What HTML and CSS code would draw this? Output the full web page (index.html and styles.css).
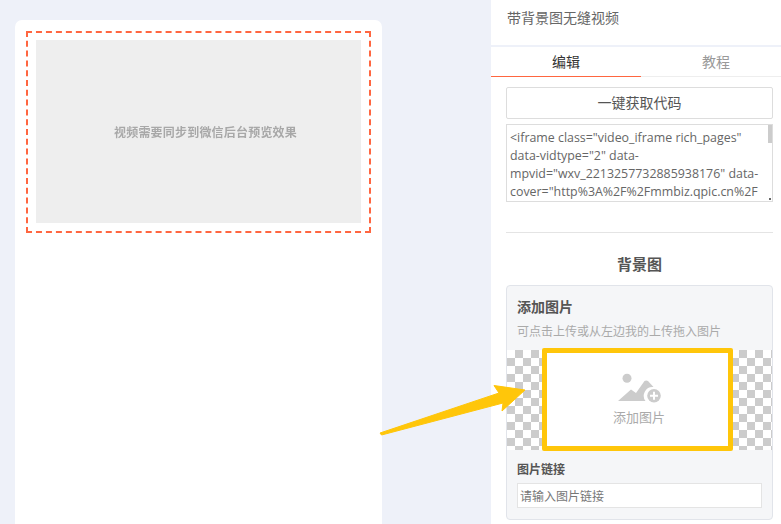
FILE: index.html
```html
<!DOCTYPE html>
<html lang="zh-CN">
<head>
    <meta charset="UTF-8">
    <meta name="viewport" content="width=device-width, initial-scale=1.0">
    <title>带背景图无缝视频</title>
    <link rel="stylesheet" href="styles.css">
</head>
<body>
    <div class="page">
        <div class="preview">
            <div class="phone">
                <div class="dashed">
                    <div class="video"><span class="videoText">视频需要同步到微信后台预览效果</span></div>
                </div>
            </div>
        </div>
        <div class="panel">
            <div class="panelTitle">带背景图无缝视频</div>
            <div class="tabs">
                <div class="tab active">编辑</div>
                <div class="tab">教程</div>
            </div>
            <div class="panelBody">
                <div class="copyBtn">一键获取代码</div>
                <div class="codeBox">
                    <textarea class="code" readonly>&lt;iframe class="video_iframe rich_pages" data-vidtype="2" data-mpvid="wxv_2213257732885938176" data-cover="http%3A%2F%2Fmmbiz.qpic.cn%2Fmmbiz_jpg%2FabcdefghijklmnopqrstuvwxyzABCDEFGHIJKLMNOPQRSTUVWXYZ0123456789abcdefghijklmnopqrstuvwxyz%2F0%3Fwx_fmt%3Djpeg" allowfullscreen="" frameborder="0" src="https://mp.weixin.qq.com/mp/readtemplate?t=pages/video_player_tmpl"&gt;&lt;/iframe&gt;</textarea>
                    <span class="codeThumb"></span>
                    <span class="codeArrow"></span>
                </div>
                <div class="line"></div>
                <div class="sectionTitle">背景图</div>
                <div class="imageBox">
                    <div class="boxLabel">添加图片</div>
                    <div class="boxHint">可点击上传或从左边我的上传拖入图片</div>
                    <div class="checker">
                        <div class="addImage">
                            <svg class="addIcon" width="44" height="30" viewBox="0 0 44 30">
                                <circle cx="10" cy="5.300" r="4.500" fill="#ccc"/>
                                <path d="M1 28 L14 16.500 L19 20 L27.500 8 Q29.200 6.800 31 8 L36.500 14 A8.800 8.800 0 0 0 28.500 28 Z" fill="#ccc"/>
                                <circle cx="37" cy="22.700" r="6.800" fill="#ccc"/>
                                <path d="M37 18.700 V26.700 M33 22.700 H41" stroke="#fff" stroke-width="2"/>
                            </svg>
                            <div class="addText">添加图片</div>
                        </div>
                    </div>
                    <div class="linkLabel">图片链接</div>
                    <div class="linkInput">请输入图片链接</div>
                </div>
            </div>
        </div>
        <svg class="arrow" width="150" height="54" viewBox="0 0 150 54">
            <path d="M1 49 L120 9 L115 1.500 L146 6 L123 27 L124 19 L2.500 51 Z" fill="#ffc60a" stroke="#ffc60a" stroke-width="1" stroke-linejoin="round"/>
        </svg>
    </div>
</body>
</html>
```

FILE: styles.css
```css
*{
    padding: 0px;
    margin: 0px;
    box-sizing: border-box;
}
html, body{
    height: 100%;
    overflow: hidden;
}
body{
    background: #eef1f9;
    font-family: "Noto Sans CJK SC", "Noto Sans", sans-serif;
    color: #555;
}
.page{
    position: relative;
    display: flex;
    height: 524px;
}
.preview{
    width: 491px;
    padding: 20px 0 0 15px;
}
.phone{
    width: 367px;
    height: 504px;
    padding: 11px;
    background: #fff;
    border-radius: 7px 7px 0 0;
}
.dashed{
    width: 345px;
    height: 202px;
    padding: 7px 8px 8px;
    border: 2px dashed #ff6640;
}
.video{
    display: flex;
    align-items: center;
    justify-content: center;
    height: 183px;
    padding-left: 14px;
    background: #eee;
    color: #a8a8a8;
    font-size: 12px;
    font-weight: 700;
    letter-spacing: 0.2px;
}
.videoText{
    filter: blur(0.3px);
}
.panel{
    width: 290px;
    overflow: hidden;
    background: #fff;
}
.panelTitle{
    height: 45px;
    padding: 7px 0 0 16px;
    font-size: 14px;
    line-height: 20px;
    color: #666;
}
.tabs{
    display: flex;
    height: 32px;
    border-top: 2px solid #eef1f9;
    border-bottom: 1px solid #eee;
}
.tab{
    flex: none;
    width: 150px;
    font-size: 14px;
    line-height: 28px;
    text-align: center;
    color: #999;
}
.tab.active{
    height: 30px;
    border-bottom: 1px solid #ff6640;
    color: #333;
}
.panelBody{
    padding: 10px 8px 0 15px;
}
.copyBtn{
    height: 32px;
    border: 1px solid #ddd;
    border-radius: 2px;
    font-size: 14px;
    line-height: 29px;
    text-align: center;
    color: #555;
}
.codeBox{
    position: relative;
    width: 267px;
    height: 78px;
    margin-top: 5px;
}
.code{
    display: block;
    width: 100%;
    height: 100%;
    padding: 4px 3px 3px;
    border: 1px solid #ddd;
    outline: none;
    resize: none;
    overflow: hidden;
    font-family: "Open Sans", sans-serif;
    font-size: 12.4px;
    line-height: 18px;
    color: #666;
}
.codeThumb{
    position: absolute;
    top: 1px;
    right: 1px;
    width: 4px;
    height: 18px;
    background: #ccc;
}
.codeArrow{
    position: absolute;
    right: 2px;
    bottom: 2px;
    width: 2px;
    height: 2px;
    background: #666;
}
.line{
    height: 1px;
    margin-top: 30px;
    background: #e4e4e4;
}
.sectionTitle{
    margin-top: 20px;
    font-size: 15px;
    font-weight: 700;
    line-height: 22px;
    text-align: center;
    color: #555;
}
.imageBox{
    height: 235px;
    margin-top: 10px;
    padding-top: 11px;
    background: #f5f6f8;
    border: 1px solid #e1e4ea;
    border-radius: 4px;
}
.boxLabel{
    padding-left: 10px;
    font-size: 14px;
    font-weight: 700;
    line-height: 18px;
    color: #555;
}
.boxHint{
    margin-top: 7px;
    padding-left: 10px;
    font-size: 12px;
    line-height: 18px;
    color: #aaa;
}
.checker{
    display: flex;
    justify-content: center;
    height: 100px;
    margin-top: 10px;
    padding-right: 4px;
    background-color: #fff;
    background-image: conic-gradient(#ccc 25%, #fff 25% 50%, #ccc 50% 75%, #fff 75%);
    background-size: 16px 16px;
}
.addImage{
    display: flex;
    flex-direction: column;
    align-items: center;
    width: 191px;
    height: 103px;
    margin-top: -2px;
    padding: 20px 0 0 3px;
    background: #fff;
    border: 5px solid #ffc60a;
    border-radius: 2px;
}
.addText{
    margin-top: 5px;
    font-size: 13px;
    line-height: 18px;
    color: #aaa;
}
.linkLabel{
    margin-top: 10px;
    padding-left: 10px;
    font-size: 12px;
    font-weight: 700;
    line-height: 18px;
    color: #555;
}
.linkInput{
    width: 245px;
    height: 25px;
    margin: 5px 0 0 10px;
    padding-left: 2px;
    background: #fff;
    border: 1px solid #e4e4e4;
    font-size: 12px;
    line-height: 24px;
    color: #777;
}
.arrow{
    position: absolute;
    left: 379px;
    top: 384px;
}
```
